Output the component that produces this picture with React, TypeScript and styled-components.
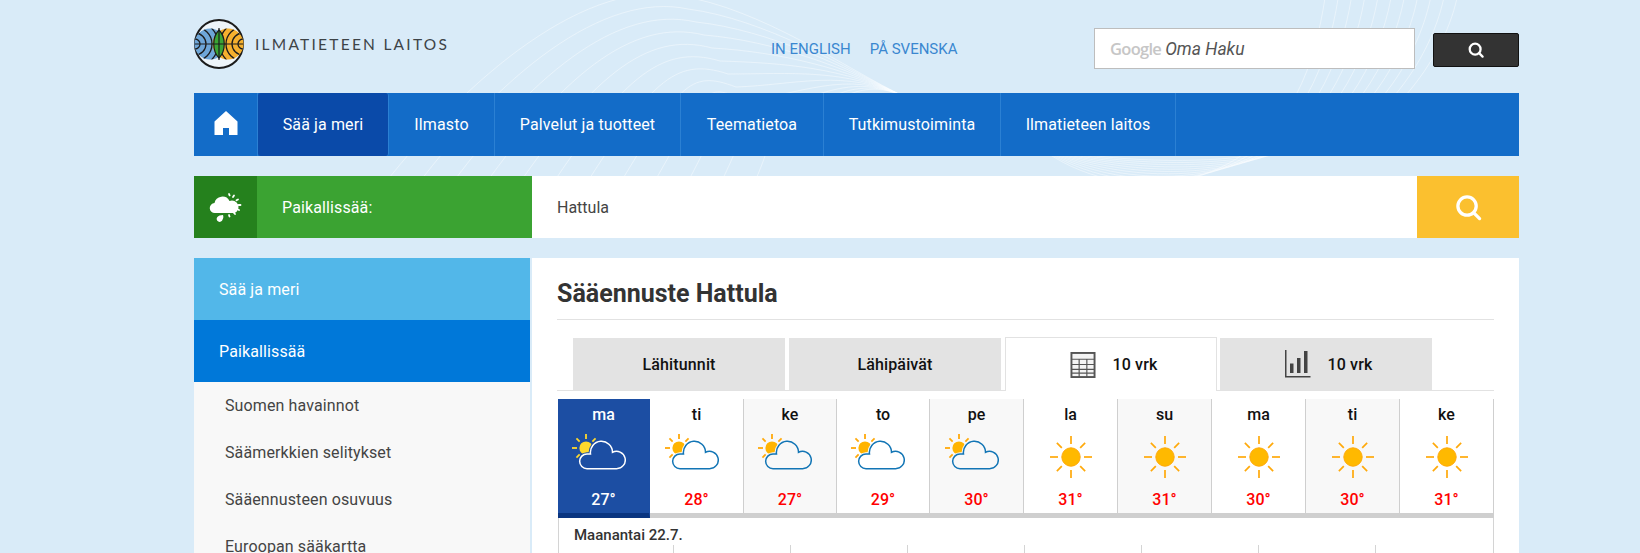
import styled, { createGlobalStyle } from 'styled-components'

const GlobalStyle = createGlobalStyle`
  html, body {
    margin: 0;
    height: 553px;
    overflow: hidden;
    background: #d9ebf8;
    font-family: Roboto, "Liberation Sans", sans-serif;
  }
`

const Page = styled.div`
  position: relative;
  width: 1640px;
  height: 553px;
  overflow: hidden;
`

const Swirl = styled.svg`
  position: absolute;
  inset: 0;
  path {
    fill: none;
    stroke: #fff;
    stroke-opacity: 0.42;
    stroke-width: 1;
  }
`

const Container = styled.div`
  position: relative;
  width: 1325px;
  margin-left: 194px;
`

const Header = styled.header`
  display: flex;
  align-items: flex-start;
  height: 93px;
`

const LogoLink = styled.a`
  display: flex;
  align-items: center;
  gap: 11px;
  width: 577px;
  margin-top: 19px;
`

const LogoText = styled.span`
  font-family: Lato, sans-serif;
  font-size: 15.5px;
  letter-spacing: 2.25px;
  color: #3d4347;
  white-space: nowrap;
`

const LangLinks = styled.div`
  display: flex;
  gap: 19px;
  margin-top: 41px;
  font-size: 15px;
  line-height: 17px;
  color: #3a87d0;
`

const SearchBox = styled.div`
  display: flex;
  align-items: center;
  gap: 4px;
  box-sizing: border-box;
  width: 321px;
  height: 41px;
  margin: 28px 0 0 auto;
  padding-left: 15px;
  background: #fff;
  border: 1px solid #bdbdbd;
`

const GoogleMark = styled.span`
  font-family: "Open Sans", sans-serif;
  font-size: 16.5px;
  font-weight: 600;
  letter-spacing: -0.7px;
  color: #c6c6c6;
`

const Placeholder = styled.span`
  font-size: 17.5px;
  font-style: italic;
  color: #555;
`

const SearchButton = styled.button`
  display: flex;
  align-items: center;
  justify-content: center;
  width: 86px;
  height: 34px;
  margin: 33px 0 0 18px;
  padding: 0;
  background: #333;
  border: 1px solid #111;
  border-radius: 2px;
`

const Nav = styled.nav`
  display: flex;
  height: 63px;
  background: #136cc8;
`

const NavHome = styled.a`
  display: flex;
  align-items: center;
  justify-content: center;
  width: 63px;
  padding-bottom: 3px;
  box-sizing: content-box;
  border-right: 1px solid #2b80d3;
`

const NavItem = styled.a<{ $active?: boolean; $width: number }>`
  display: flex;
  align-items: center;
  justify-content: center;
  box-sizing: border-box;
  width: ${p => p.$width}px;
  font-size: 16px;
  letter-spacing: 0.12px;
  color: #fff;
  background: ${p => (p.$active ? '#0a4aa9' : 'transparent')};
  border-radius: ${p => (p.$active ? '3px' : '0')};
  border-right: 1px solid #2b80d3;
`

const LocationBar = styled.div`
  display: flex;
  height: 62px;
  margin-top: 20px;
`

const LocationIcon = styled.div`
  display: flex;
  align-items: center;
  justify-content: center;
  width: 63px;
  padding-top: 2px;
  box-sizing: border-box;
  background: #25811d;
`

const LocationLabel = styled.div`
  display: flex;
  align-items: center;
  width: 275px;
  padding-left: 25px;
  box-sizing: border-box;
  font-size: 16px;
  letter-spacing: 0.12px;
  color: #fff;
  background: #3ba332;
`

const LocationInput = styled.div`
  flex: 1;
  display: flex;
  align-items: center;
  padding-left: 25px;
  font-size: 16px;
  color: #444;
  background: #fff;
`

const LocationGo = styled.div`
  display: flex;
  align-items: center;
  justify-content: center;
  width: 102px;
  background: #fbc02f;
`

const Columns = styled.div`
  display: grid;
  grid-template-columns: 336px 987px;
  gap: 2px;
  margin-top: 20px;
`

const Side = styled.aside`
  background: #f8f8f8;
`

const SideHead = styled.a<{ $bg: string }>`
  display: flex;
  align-items: center;
  height: 62px;
  padding-left: 25px;
  font-size: 16px;
  letter-spacing: 0.12px;
  color: #fff;
  background: ${p => p.$bg};
`

const SideLink = styled.a`
  display: flex;
  align-items: center;
  height: 47px;
  padding-left: 31px;
  font-size: 16px;
  letter-spacing: 0.12px;
  color: #444;
`

const Main = styled.main`
  box-sizing: border-box;
  height: 400px;
  padding: 0 25px 0 25px;
  background: #fff;
`

const Title = styled.h1`
  margin: 0;
  height: 62px;
  line-height: 72px;
  box-sizing: border-box;
  font-size: 25px;
  font-weight: 700;
  color: #333;
  border-bottom: 1px solid #e2e2e2;
`

const Tabs = styled.div`
  display: flex;
  align-items: flex-end;
  gap: 4px;
  height: 70px;
  padding-left: 16px;
  border-bottom: 1px solid #e2e2e2;
`

const Tab = styled.a<{ $active?: boolean }>`
  display: flex;
  align-items: center;
  justify-content: center;
  gap: 16px;
  box-sizing: border-box;
  width: 212px;
  height: ${p => (p.$active ? '54px' : '52px')};
  font-size: 16px;
  font-weight: 500;
  letter-spacing: 0.15px;
  color: #111;
  background: ${p => (p.$active ? '#fff' : '#e3e3e3')};
  border: ${p => (p.$active ? '1px solid #e2e2e2' : 'none')};
  border-bottom: none;
  margin-bottom: ${p => (p.$active ? '-1px' : '0')};
  margin-right: ${p => (p.$active ? '-1px' : '0')};
  svg {
    margin-left: 6px;
  }
`

const Days = styled.div`
  display: grid;
  grid-template-columns: 92px 94px 93px 93px repeat(6, 94px);
  width: 936px;
  margin: 8px 0 0 1px;
  box-sizing: border-box;
`

const Day = styled.div<{ $selected?: boolean; $shade?: boolean }>`
  display: flex;
  flex-direction: column;
  align-items: center;
  box-sizing: border-box;
  height: 119px;
  padding-top: 6px;
  font-weight: 500;
  font-size: 16px;
  line-height: 19px;
  color: ${p => (p.$selected ? '#fff' : '#111')};
  background: ${p => (p.$selected ? '#1c4ea3' : p.$shade ? '#f8f8f8' : '#fff')};
  border-right: 1px solid ${p => (p.$selected ? '#1c4ea3' : '#cfcfcf')};
  border-bottom: 5px solid ${p => (p.$selected ? '#0a3580' : '#cfcfcf')};
`

const DayIcon = styled.div<{ $cloud?: boolean }>`
  display: flex;
  justify-content: center;
  height: ${p => (p.$cloud ? '56px' : '55px')};
  padding-top: ${p => (p.$cloud ? '10px' : '11px')};
  margin-right: ${p => (p.$cloud ? '10px' : '0')};
`

const Temp = styled.div<{ $selected?: boolean }>`
  color: ${p => (p.$selected ? '#fff' : '#f00')};
`

const Detail = styled.div`
  width: 936px;
  margin-left: 1px;
  box-sizing: border-box;
  height: 60px;
  border-left: 1px solid #d4d4d4;
  border-right: 1px solid #d4d4d4;
`

const DetailDate = styled.div`
  height: 27px;
  padding: 8px 0 0 15px;
  box-sizing: border-box;
  line-height: 18px;
  font-size: 15px;
  font-weight: 500;
  color: #333;
`

const Ticks = styled.div`
  display: grid;
  grid-template-columns: 115px repeat(7, 117px);
  height: 30px;
`

const Tick = styled.div`
  border-right: 1px solid #d4d4d4;
  &:last-child {
    border-right: none;
  }
`

const HomeIcon = () => (
  <svg width="24" height="26" viewBox="0 0 24 26">
    <path fill="#fff" d="M12 1 L23.5 11.5 V25 H15 V18 H9 V25 H.5 V11.5 Z" />
  </svg>
)

const Magnifier = ({ size, color, stroke }: { size: number; color: string; stroke: number }) => (
  <svg width={size} height={size} viewBox="0 0 28 28" fill="none" stroke={color} strokeWidth={stroke}>
    <circle cx="12.5" cy="12.5" r="9.5" />
    <path strokeLinecap="round" d="M19.5 19.5 L25.5 25.5" />
  </svg>
)

const RainSunIcon = () => (
  <svg width="34" height="30" viewBox="0 0 34 30" fill="#fff">
    <path d="M6 20 a5 5 0 0 1 -.5 -10 a8 8 0 0 1 15 -2 a6 6 0 0 1 5 12 Z" />
    <path d="M14 22 c.6 2 .4 3 -.4 4.5 a3 3 0 1 1 -5.2 -2.6 c1 -1.2 3 -1.6 5.6 -1.9 Z" />
    <g stroke="#fff" strokeWidth="1.8" strokeLinecap="round">
      <path d="M20 1 L20.6 2.4" />
      <path d="M25 2.5 L24 4" />
      <path d="M29 6.5 L27.5 7.3" />
      <path d="M31.5 12 L29.5 12" />
      <path d="M30 17 L28.5 16.2" />
      <path d="M26 21 L25 19.8" />
      <path d="M20.5 23.5 L20 22" />
    </g>
  </svg>
)

const TableIcon = () => (
  <svg width="26" height="26" viewBox="0 0 26 27" fill="none" stroke="#555">
    <rect x="1" y="1" width="24" height="25" strokeWidth="2" fill="#f4f4f4" />
    <path strokeWidth="1.2" d="M1 7.5 H25 M1 13 H25 M1 18 H25 M1 22 H25 M9 7 V26 M17 7 V26" />
  </svg>
)

const ChartIcon = () => (
  <svg width="26" height="28" viewBox="0 0 26 28" fill="#444">
    <rect x="0" y="0" width="1.5" height="27" />
    <rect x="0" y="26" width="25.5" height="1.5" />
    <rect x="5" y="13.5" width="3.5" height="9.5" />
    <rect x="12" y="8" width="3.5" height="15" />
    <rect x="19" y="1" width="3.5" height="22" />
  </svg>
)

const SunRays = ({ cx, cy, near, far, diag, color, width }: {
  cx: number
  cy: number
  near: number
  far: number
  diag: number
  color: string
  width: number
}) => {
  const angles = [0, 45, 90, 135, 180, 225, 270, 315]
  return (
    <g stroke={color} strokeWidth={width}>
      {angles.map(a => {
        const r = (a * Math.PI) / 180
        const end = a % 90 === 0 ? far : diag
        return (
          <line
            key={a}
            x1={cx + Math.cos(r) * near}
            y1={cy + Math.sin(r) * near}
            x2={cx + Math.cos(r) * end}
            y2={cy + Math.sin(r) * end}
          />
        )
      })}
    </g>
  )
}

const SunIcon = () => (
  <svg width="44" height="44" viewBox="0 0 44 44">
    <SunRays cx={22} cy={22} near={13} far={21} diag={20} color="#ffa90a" width={1.7} />
    <circle cx="22" cy="22" r="9.2" fill="#ffb900" stroke="#ffa90a" strokeWidth="1" />
  </svg>
)

const CloudPath = 'M15 34.7 H44.5 A8.7 8.7 0 1 0 40.5 18.3 A11.06 11.06 0 1 0 18.5 20 H15 A7.35 7.35 0 0 0 15 34.7 Z'

const PartlyCloudy = ({ selected, bg }: { selected?: boolean; bg: string }) => {
  const sun = selected ? '#ffd92c' : '#ffb400'
  const ray = selected ? '#ffd92c' : '#ffa90a'
  return (
    <svg width="54" height="36" viewBox="0 0 54 36">
      <SunRays cx={14} cy={14} near={9} far={14} diag={13.5} color={ray} width={1.8} />
      <circle cx="14" cy="14" r="6.6" fill={sun} />
      <path d={CloudPath} fill={bg} stroke={bg} strokeWidth="3.5" />
      <path d={CloudPath} fill={bg} stroke={selected ? '#fff' : '#1275b5'} strokeWidth="1.5" />
    </svg>
  )
}

const Logo = () => {
  const rings = [5, 11, 17, 23]
  return (
    <svg width="50" height="50" viewBox="0 0 50 50">
      <defs>
        <clipPath id="logo-left">
          <circle cx="16" cy="25" r="15.5" />
        </clipPath>
        <clipPath id="logo-right">
          <circle cx="34" cy="25" r="15.5" />
        </clipPath>
      </defs>
      <circle cx="25" cy="25" r="24" fill="#eef5fa" stroke="#1c1c1c" strokeWidth="2" />
      <circle cx="16" cy="25" r="15.5" fill="#6ea6d8" />
      <circle cx="34" cy="25" r="15.5" fill="#f5b02e" />
      <g fill="none" stroke="#1c1c1c" strokeWidth="1.3">
        <g clipPath="url(#logo-left)">
          {rings.map(r => (
            <circle key={r} cx="1" cy="25" r={r} />
          ))}
        </g>
        <g clipPath="url(#logo-right)">
          {rings.map(r => (
            <circle key={r} cx="49" cy="25" r={r} />
          ))}
        </g>
      </g>
      <path d="M25 11 C32 18 32 32 25 39 C18 32 18 18 25 11 Z" fill="#3aa535" stroke="#1c1c1c" strokeWidth="1.2" />
      <path d="M25 9 V41 M1 25 H49" stroke="#1c1c1c" strokeWidth="1.2" />
    </svg>
  )
}

const fanLeft = Array.from({ length: 12 }, (_, i) => i)
const fanRight = Array.from({ length: 11 }, (_, i) => i)

const days = [
  { name: 'ma', temp: 27, cloud: true, selected: true },
  { name: 'ti', temp: 28, cloud: true },
  { name: 'ke', temp: 27, cloud: true, shade: true },
  { name: 'to', temp: 29, cloud: true },
  { name: 'pe', temp: 30, cloud: true, shade: true },
  { name: 'la', temp: 31 },
  { name: 'su', temp: 31, shade: true },
  { name: 'ma', temp: 30 },
  { name: 'ti', temp: 30, shade: true },
  { name: 'ke', temp: 31 },
]

const navItems = [
  { label: 'Sää ja meri', width: 131, active: true },
  { label: 'Ilmasto', width: 106 },
  { label: 'Palvelut ja tuotteet', width: 186 },
  { label: 'Teematietoa', width: 143 },
  { label: 'Tutkimustoiminta', width: 177 },
  { label: 'Ilmatieteen laitos', width: 175 },
]

const sideLinks = ['Suomen havainnot', 'Säämerkkien selitykset', 'Sääennusteen osuvuus', 'Euroopan sääkartta']

export default function App() {
  return (
    <Page>
      <GlobalStyle />
      <Swirl width="1640" height="553" viewBox="0 0 1640 553">
        {fanLeft.map(i => (
          <path
            key={i}
            d={`M${372 + i * 34} ${200} C${470 + i * 30} ${70 + i * 2} ${590 + i * 14} ${-22 + i * 13} ${680 + i * 8} ${-4 + i * 13} C${760 + i * 5} ${8 + i * 11} ${845} ${68} 905 97`}
          />
        ))}
        {fanRight.map(i => (
          <path
            key={i}
            d={`M1040 148 C${1120 + i * 8} ${206 - i * 3} ${1240 + i * 10} ${196 - i * 4} ${1296 + i * 11} 95 C${1312 + i * 12} 65 ${1320 + i * 13} 30 ${1325 + i * 13.2} -2`}
          />
        ))}
      </Swirl>
      <Container>
        <Header>
          <LogoLink>
            <Logo />
            <LogoText>ILMATIETEEN LAITOS</LogoText>
          </LogoLink>
          <LangLinks>
            <span>IN ENGLISH</span>
            <span>PÅ SVENSKA</span>
          </LangLinks>
          <SearchBox>
            <GoogleMark>Google</GoogleMark>
            <Placeholder>Oma Haku</Placeholder>
          </SearchBox>
          <SearchButton aria-label="Hae">
            <Magnifier size={16} color="#fff" stroke={4} />
          </SearchButton>
        </Header>
        <Nav>
          <NavHome>
            <HomeIcon />
          </NavHome>
          {navItems.map(item => (
            <NavItem key={item.label} $active={item.active} $width={item.width}>
              {item.label}
            </NavItem>
          ))}
        </Nav>
        <LocationBar>
          <LocationIcon>
            <RainSunIcon />
          </LocationIcon>
          <LocationLabel>Paikallissää:</LocationLabel>
          <LocationInput>Hattula</LocationInput>
          <LocationGo>
            <Magnifier size={27} color="#fff" stroke={3.4} />
          </LocationGo>
        </LocationBar>
        <Columns>
          <Side>
            <SideHead $bg="#52b7e9">Sää ja meri</SideHead>
            <SideHead $bg="#0078d9">Paikallissää</SideHead>
            {sideLinks.map(link => (
              <SideLink key={link}>{link}</SideLink>
            ))}
          </Side>
          <Main>
            <Title>Sääennuste Hattula</Title>
            <Tabs>
              <Tab>Lähitunnit</Tab>
              <Tab>Lähipäivät</Tab>
              <Tab $active>
                <TableIcon />
                10 vrk
              </Tab>
              <Tab>
                <ChartIcon />
                10 vrk
              </Tab>
            </Tabs>
            <Days>
              {days.map((d, i) => (
                <Day key={i} $selected={d.selected} $shade={d.shade}>
                  {d.name}
                  <DayIcon $cloud={d.cloud}>
                    {d.cloud ? (
                      <PartlyCloudy selected={d.selected} bg={d.selected ? '#1c4ea3' : d.shade ? '#f8f8f8' : '#fff'} />
                    ) : (
                      <SunIcon />
                    )}
                  </DayIcon>
                  <Temp $selected={d.selected}>{d.temp}°</Temp>
                </Day>
              ))}
            </Days>
            <Detail>
              <DetailDate>Maanantai 22.7.</DetailDate>
              <Ticks>
                {Array.from({ length: 8 }, (_, i) => (
                  <Tick key={i} />
                ))}
              </Ticks>
            </Detail>
          </Main>
        </Columns>
      </Container>
    </Page>
  )
}
